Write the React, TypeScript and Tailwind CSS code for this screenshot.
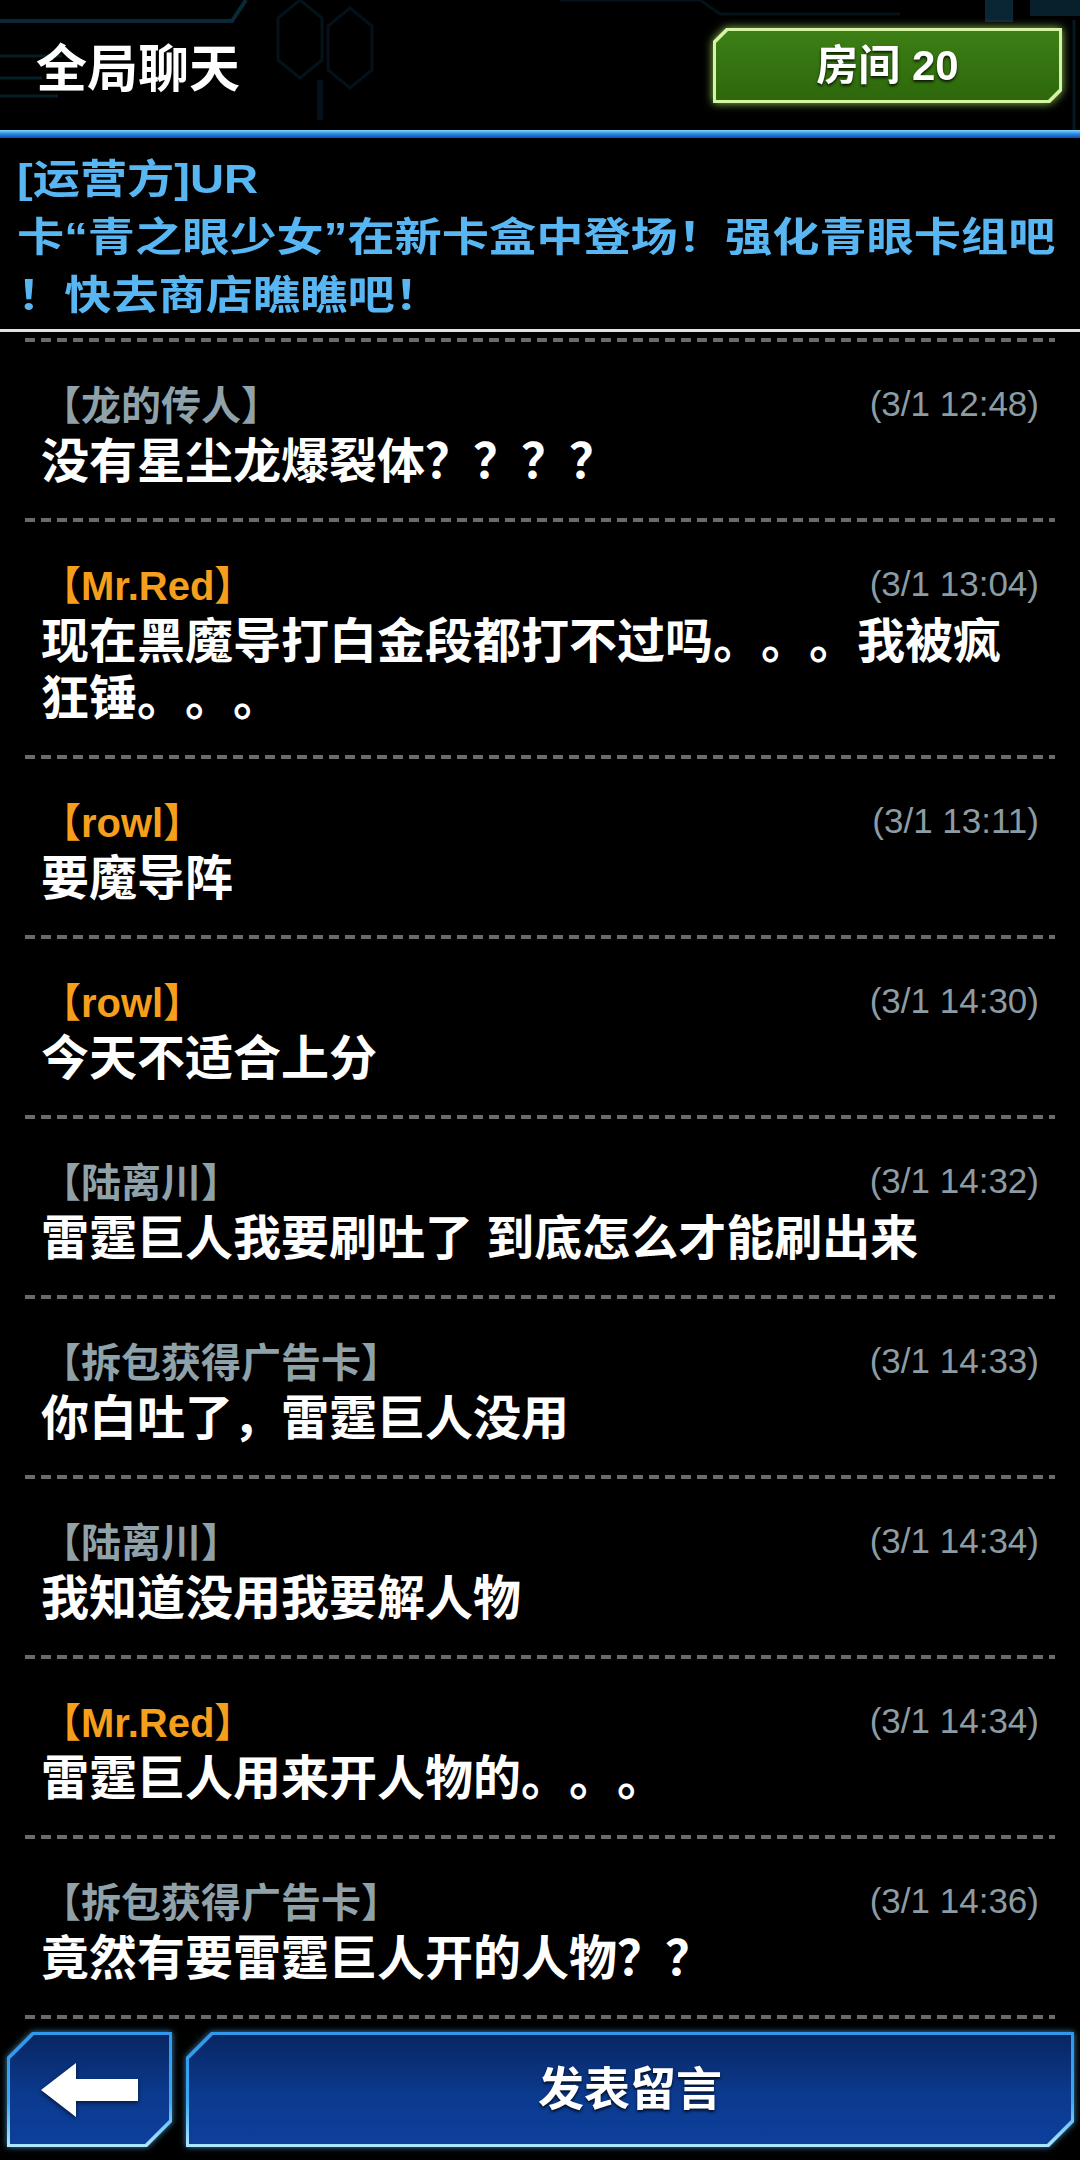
import React from 'react';

type Msg = { name: string; orange?: boolean; time: string; text: string };

const messages: Msg[] = [
  { name: '【龙的传人】', time: '(3/1 12:48)', text: '没有星尘龙爆裂体？？？？' },
  { name: '【Mr.Red】', orange: true, time: '(3/1 13:04)', text: '现在黑魔导打白金段都打不过吗。。。我被疯狂锤。。。' },
  { name: '【rowl】', orange: true, time: '(3/1 13:11)', text: '要魔导阵' },
  { name: '【rowl】', orange: true, time: '(3/1 14:30)', text: '今天不适合上分' },
  { name: '【陆离川】', time: '(3/1 14:32)', text: '雷霆巨人我要刷吐了 到底怎么才能刷出来' },
  { name: '【拆包获得广告卡】', time: '(3/1 14:33)', text: '你白吐了，雷霆巨人没用' },
  { name: '【陆离川】', time: '(3/1 14:34)', text: '我知道没用我要解人物' },
  { name: '【Mr.Red】', orange: true, time: '(3/1 14:34)', text: '雷霆巨人用来开人物的。。。' },
  { name: '【拆包获得广告卡】', time: '(3/1 14:36)', text: '竟然有要雷霆巨人开的人物？？' },
];

function Dashes() {
  return <div className="mx-[25px] h-[4px] shrink-0 bg-[repeating-linear-gradient(90deg,#6b6b6b_0_10px,transparent_10px_16px)]" />;
}

function HeaderDecor() {
  // faint circuit lines behind the header
  return (
    <svg className="absolute inset-0 pointer-events-none" width="1080" height="130" viewBox="0 0 1080 130" fill="none">
      <path d="M0 21 H232 L246 0" stroke="#0a2835" strokeWidth="4" />
      <path d="M0 56 H62 M0 78 H42 M0 96 H58" stroke="#081e27" strokeWidth="3" />
      <path d="M300 0 L322 18 L322 60 L300 78 L278 60 L278 18 Z" stroke="#04121a" strokeWidth="3" />
      <path d="M350 8 L372 26 L372 70 L350 88 L328 70 L328 26 Z" stroke="#04111a" strokeWidth="3" />
      <path d="M320 80 L320 120" stroke="#04111a" strokeWidth="6" />
      <rect x="985" y="0" width="28" height="22" fill="#0a2533" />
      <rect x="1030" y="0" width="50" height="16" fill="#08202c" />
      <path d="M1074 20 V130" stroke="#061820" strokeWidth="3" />
      <path d="M560 0 H700 L720 14 H900" stroke="#04121a" strokeWidth="3" />
    </svg>
  );
}

function MessageRow({ m }: { m: Msg }) {
  return (
    <div className="px-[41px] pt-[40px] pb-[28px]">
      <div className="flex items-start justify-between h-[48px]">
        <span className={`text-[40px] leading-[48px] font-bold ${m.orange ? 'text-[#f59f1c]' : 'text-[#8fa1a9]'}`}>
          {m.name}
        </span>
        <span className="text-[35px] leading-[44px] text-[#8b9ca4]">{m.time}</span>
      </div>
      <div className="mt-[3px] text-[48px] leading-[57px] font-bold text-white">{m.text}</div>
    </div>
  );
}

export default function App() {
  return (
    <div className="w-[1080px] h-[2160px] bg-black overflow-hidden flex flex-col [text-spacing-trim:space-all] font-['Liberation_Sans','Noto_Sans_CJK_SC',sans-serif]">
      {/* Header */}
      <div className="relative h-[130px] shrink-0 flex items-start justify-between">
        <HeaderDecor />
        <div className="relative pl-[36px] pt-[40px] text-[51px] leading-[60px] font-bold text-white">全局聊天</div>
        <div className="relative mt-[28px] mr-[18px] drop-shadow-[0_0_5px_rgba(170,235,100,0.85)]">
          <div className="w-[349px] h-[75px] p-[3px] bg-[#d6f5a4] [clip-path:polygon(13px_0,100%_0,100%_calc(100%_-_12px),calc(100%_-_12px)_100%,0_100%,0_13px)]">
            <div className="w-full h-full flex items-center justify-center bg-[linear-gradient(to_bottom,#3d7f16,#2d680b)] [clip-path:polygon(12px_0,100%_0,100%_calc(100%_-_11px),calc(100%_-_11px)_100%,0_100%,0_12px)] text-[42px] font-bold text-white [text-shadow:0_2px_3px_rgba(0,0,0,0.8)]">
              房间 20
            </div>
          </div>
        </div>
      </div>
      <div className="h-[8px] shrink-0 bg-[linear-gradient(to_bottom,#86d4ff,#2c90e6_45%,#0b4cb2)]" />

      {/* Announcement */}
      <div className="pt-[12px] pb-[5px] px-[17px] text-[40px] leading-[58px] font-semibold text-[#58b6f2]">
        <div className="origin-left scale-x-[1.18] whitespace-nowrap">[运营方]UR</div>
        <div className="origin-left scale-x-[1.18] whitespace-nowrap">卡“青之眼少女”在新卡盒中登场！强化青眼卡组吧</div>
        <div className="origin-left scale-x-[1.18] whitespace-nowrap">！快去商店瞧瞧吧！</div>
      </div>
      <div className="h-[3px] shrink-0 bg-[#e2e2e2]" />
      <div className="h-[6px] shrink-0" />

      {/* Messages */}
      <Dashes />
      {messages.map((m, i) => (
        <React.Fragment key={i}>
          <MessageRow m={m} />
          <Dashes />
        </React.Fragment>
      ))}

      {/* Bottom buttons */}
      <div className="mt-[13px] flex gap-[14px] pl-[7px] pr-[6px]">
        <div className="drop-shadow-[0_0_3px_rgba(90,190,255,0.7)]">
          <div className="w-[165px] h-[115px] p-[3px] bg-[linear-gradient(to_bottom,#2f98ee,#3aa8f5_60%,#aee8ff)] [clip-path:polygon(25px_0,100%_0,100%_calc(100%_-_25px),calc(100%_-_25px)_100%,0_100%,0_25px)]">
            <div className="w-full h-full flex items-center justify-center bg-[linear-gradient(to_bottom,#082662,#0b3a8e_55%,#0d3f9c)] [clip-path:polygon(24px_0,100%_0,100%_calc(100%_-_24px),calc(100%_-_24px)_100%,0_100%,0_24px)]">
              <svg width="98" height="54" viewBox="0 0 98 54" className="drop-shadow-[0_2px_2px_rgba(0,0,0,0.6)]">
                <polygon points="0,27 35,0 35,16 97,16 97,38 35,38 35,54" fill="#ffffff" />
              </svg>
            </div>
          </div>
        </div>
        <div className="flex-1 drop-shadow-[0_0_3px_rgba(90,190,255,0.7)]">
          <div className="w-full h-[115px] p-[3px] bg-[linear-gradient(to_bottom,#2f98ee,#3aa8f5_60%,#aee8ff)] [clip-path:polygon(25px_0,100%_0,100%_calc(100%_-_25px),calc(100%_-_25px)_100%,0_100%,0_25px)]">
            <div className="w-full h-full flex items-center justify-center bg-[linear-gradient(to_bottom,#082662,#0b3a8e_55%,#0d3f9c)] [clip-path:polygon(24px_0,100%_0,100%_calc(100%_-_24px),calc(100%_-_24px)_100%,0_100%,0_24px)] text-[46px] font-bold text-white [text-shadow:0_2px_3px_rgba(0,0,0,0.8)]">
              发表留言
            </div>
          </div>
        </div>
      </div>
    </div>
  );
}
